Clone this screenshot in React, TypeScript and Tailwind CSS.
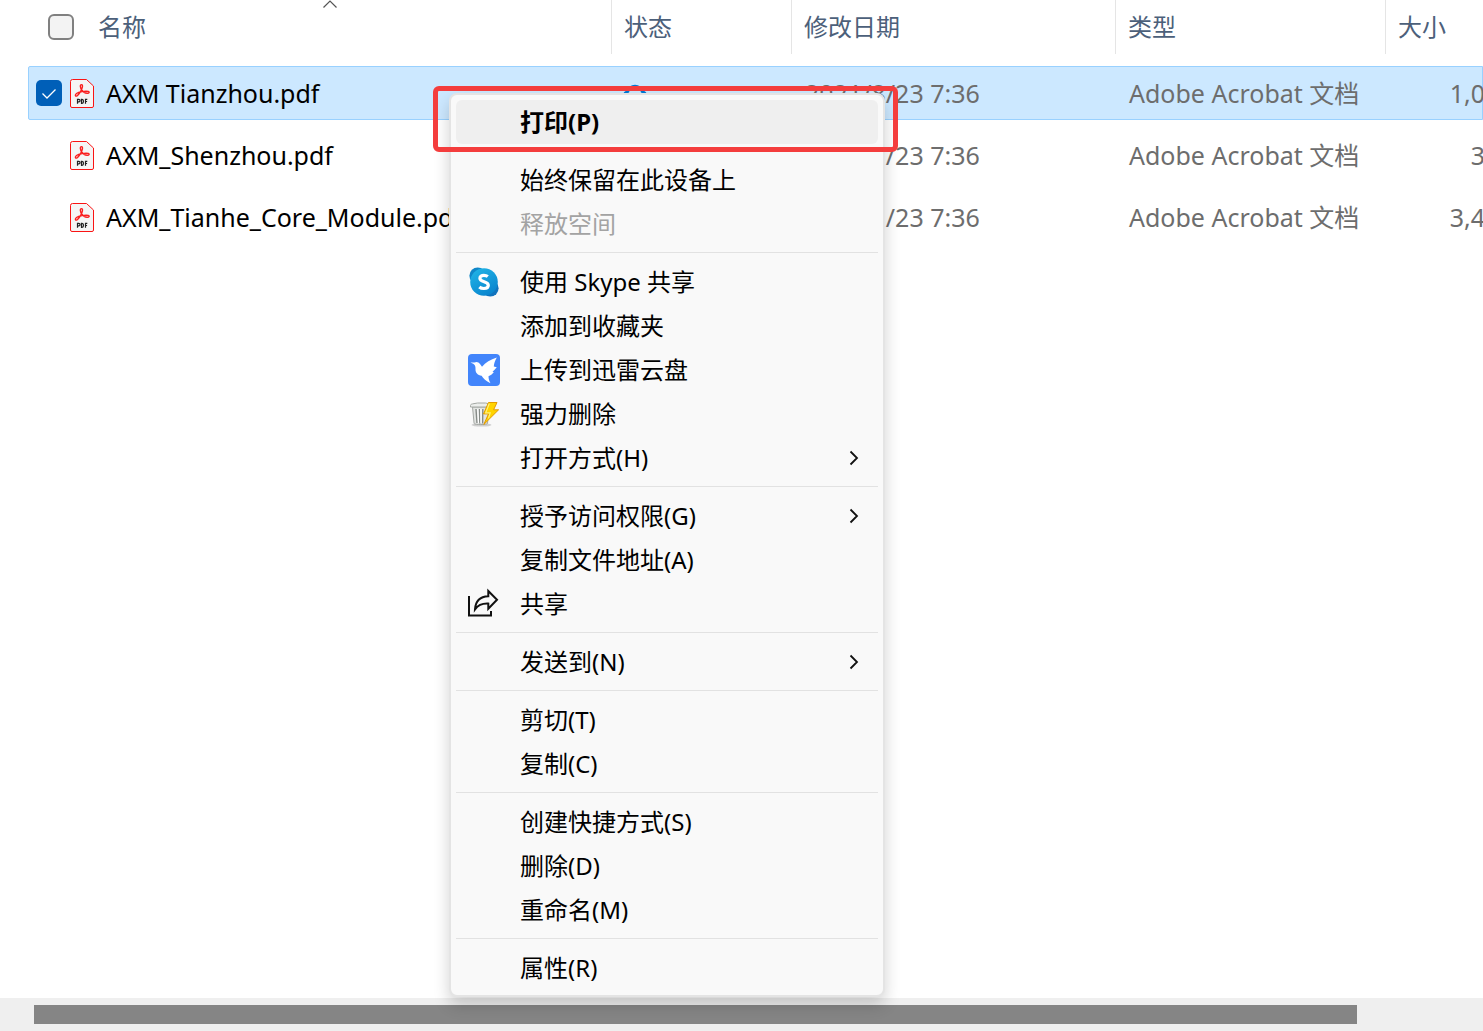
import { Fragment, type ReactNode } from "react";

const PdfIcon = () => (
  <svg viewBox="0 0 24 29" className="w-6 h-[29px] shrink-0" aria-hidden="true">
    <path d="M2.500.500H16.500l7 6.500V27a1.500 1.500 0 0 1-1.500 1.500H2A1.500 1.500 0 0 1 .500 27V2.500A2 2 0 0 1 2.500.500Z" fill="#f5f5f5" stroke="#fa1414" />
    <path
      d="M11.500 5.600c-2 0-1 3.600.2 5.400 1.200 2 3.500 3.300 5.500 3.300 2.200 0 2.600-1.500 1-1.900-3-.7-9.500.5-11.700 2.100-1.900 1.500-1.200 3.300.5 2.300 2.200-1.500 5-6.100 5.400-8.800.2-1.500 0-2.400-.9-2.400Z"
      fill="none"
      stroke="#fa1e1e"
      strokeWidth="1.400"
    />
    <path
      d="M7.500 24.800v-4.500h1.300a1.100 1.100 0 0 1 0 2.500H7.500M11.500 20.300v4h.6c1 0 1.400-.7 1.400-2s-.4-2-1.400-2ZM15.500 24.800v-4.500h1.800M15.500 22.500h1.600"
      fill="none"
      stroke="#222"
      strokeWidth="1.200"
    />
  </svg>
);

const CloudIcon = () => (
  <svg viewBox="0 0 24 18" className="w-6 h-[18px]" aria-hidden="true">
    <path d="M5.500 16.500a4.500 4.500 0 0 1-.6-8.900 7.300 7.300 0 0 1 14.200 0A4.500 4.500 0 0 1 18.500 16.500Z" fill="none" stroke="#0078d4" strokeWidth="2.600" />
  </svg>
);

const SkypeIcon = () => (
  <svg viewBox="0 0 32 32" className="w-8 h-8" aria-hidden="true">
    <defs>
      <linearGradient id="skype" x1="0" y1="0" x2="0.6" y2="1">
        <stop offset="0" stopColor="#22b8e8" />
        <stop offset="1" stopColor="#0a86cf" />
      </linearGradient>
    </defs>
    <circle cx="9.700" cy="9.700" r="8.300" fill="#0f86c8" />
    <circle cx="22.300" cy="22.300" r="8.300" fill="#1173bd" />
    <circle cx="16" cy="16" r="13.800" fill="url(#skype)" />
    <path
      d="M19.800 10.600c-1-.8-2.400-1.200-4-1.200-2.200 0-3.900 1-3.900 2.900 0 4.300 8.400 2.600 8.400 6.900 0 2.200-1.800 3.300-4.400 3.300-1.800 0-3.500-.5-4.600-1.500"
      fill="none"
      stroke="#fff"
      strokeWidth="3.200"
    />
  </svg>
);

const ThunderIcon = () => (
  <svg viewBox="0 0 32 32" className="w-8 h-8" aria-hidden="true">
    <rect width="32" height="32" rx="4" fill="#4285fb" />
    <path d="M2.500 8.500 6.500 8.600C8.200 7.200 10.800 8 12 10l2 2.800c3.500-4 8.500-7.300 14.800-9.200-2 3.400-2.700 6-3 9l3 .6c-1.600 2-2.800 3.200-4.300 4.200l1.300.8c-1.600 2-3.200 3.200-5.300 4 .1 2.600.7 4.800 2 7-4.600-2.400-7.200-4.700-8.900-7.500-3.800-.4-6.400-3-6.100-6.700.2-2.700-.4-4.900-5-6.500Z" fill="#fff" />
  </svg>
);

const ForceDeleteIcon = () => (
  <svg viewBox="0 0 32 32" className="w-8 h-8" aria-hidden="true">
    <ellipse cx="13.500" cy="27" rx="10" ry="1.600" fill="#cfcfcf" />
    <path d="m4.500 9 1.600 16.500c.1 1.400 13.200 1.400 13.400 0L21 9Z" fill="#e2e4e2" stroke="#a4a8a4" />
    <path d="M8 11l1 14M11.300 11l.5 14.500M14.800 11l-.2 14.500" stroke="#868b87" strokeWidth="1.400" />
    <path d="M9.800 11l.7 14M13 11v14" stroke="#fff" strokeWidth="1.200" />
    <path d="M2.500 7.500c0-1 1-1.500 2-1.600l5-.9h8l4 .9c1 .1 2 .6 2 1.600V9h-21Z" fill="#eceeec" stroke="#a4a8a4" />
    <path d="M20.500 4.500h8.500l-3.400 7.300h5L15.800 26.500l4.700-10.600h-5Z" fill="#ffd400" stroke="#e39a00" strokeLinejoin="round" />
    <path d="m21.300 5.500-3.600 9.300h4.500l-1.700 5.600" fill="none" stroke="#fff27a" strokeWidth="1.200" />
  </svg>
);

const ShareIcon = () => (
  <svg viewBox="0 0 32 32" className="w-8 h-8" fill="none" stroke="#111" strokeWidth="2" aria-hidden="true">
    <path d="M1 8v19.500h22V23" />
    <path d="M20.300 3v5.200C12.500 8.500 7.500 13 7 21.300c3-4.200 7.500-6 13.300-5.700v5.200l8.700-9Z" />
  </svg>
);

type Item = { label: string; icon?: ReactNode; submenu?: boolean; disabled?: boolean; active?: boolean };

const groups: Item[][] = [
  [{ label: "打印(P)", active: true }],
  [{ label: "始终保留在此设备上" }, { label: "释放空间", disabled: true }],
  [
    { label: "使用 Skype 共享", icon: <SkypeIcon /> },
    { label: "添加到收藏夹" },
    { label: "上传到迅雷云盘", icon: <ThunderIcon /> },
    { label: "强力删除", icon: <ForceDeleteIcon /> },
    { label: "打开方式(H)", submenu: true },
  ],
  [
    { label: "授予访问权限(G)", submenu: true },
    { label: "复制文件地址(A)" },
    { label: "共享", icon: <ShareIcon /> },
  ],
  [{ label: "发送到(N)", submenu: true }],
  [{ label: "剪切(T)" }, { label: "复制(C)" }],
  [{ label: "创建快捷方式(S)" }, { label: "删除(D)" }, { label: "重命名(M)" }],
  [{ label: "属性(R)" }],
];

const files = [
  { name: "AXM Tianzhou.pdf", size: "1,0", selected: true },
  { name: "AXM_Shenzhou.pdf", size: "3", selected: false },
  { name: "AXM_Tianhe_Core_Module.pdf", size: "3,4", selected: false },
];

const columns = "grid grid-cols-[584px_180px_324px_270px_110px]";

const FileTable = () => (
  <table className="block pl-7 whitespace-nowrap">
    <thead className="block text-[#4c607a]">
      <tr className={`${columns} h-[54px] text-left leading-[54px]`}>
        <th className="relative flex items-center gap-6 pl-5 font-normal border-r border-[#e5e5e5]">
          <input type="checkbox" aria-label="全选" className="appearance-none w-[26px] h-[26px] rounded-md border-2 border-[#808080] bg-[#f3f3f3]" />
          名称
          <svg viewBox="0 0 14 8" className="absolute top-0 left-[295px] w-3.5 h-2" fill="none" stroke="#555" strokeWidth="1.200" aria-hidden="true">
            <path d="m.5 7.500 6.500-6.500 6.500 6.500" />
          </svg>
        </th>
        <th className="pl-3 font-normal border-r border-[#e5e5e5]">状态</th>
        <th className="pl-3 font-normal border-r border-[#e5e5e5]">修改日期</th>
        <th className="pl-3 font-normal border-r border-[#e5e5e5]">类型</th>
        <th className="pl-3 font-normal">大小</th>
      </tr>
    </thead>
    <tbody className="flex flex-col gap-2 pt-3 text-[25px] text-[#6d6d6d]">
      {files.map((file) => (
        <tr
          key={file.name}
          className={`${columns} h-[54px] items-center border rounded-l-xs ${file.selected ? "bg-[#cce8ff] border-[#99d1ff]" : "border-transparent"}`}
        >
          <td className="flex items-center pl-[7px] text-black">
            <span className="relative w-[26px] h-[26px] mr-2">
              {file.selected && (
                <>
                  <input type="checkbox" aria-label={file.name} defaultChecked className="block appearance-none w-[26px] h-[26px] rounded-[5px] bg-[#005fb8]" />
                  <svg viewBox="0 0 26 26" className="absolute inset-0 pointer-events-none" fill="none" stroke="#fff" strokeWidth="1.300" aria-hidden="true">
                    <path d="m6.500 13.500 4.500 4.500 8.500-8.500" />
                  </svg>
                </>
              )}
            </span>
            <PdfIcon />
            <span className="pl-3">{file.name}</span>
          </td>
          <td className="pl-2.5">{file.selected && <CloudIcon />}</td>
          <td className="pl-3">2021/8/23 7:36</td>
          <td className="pl-3">Adobe Acrobat 文档</td>
          <td className="pr-3 text-right">{file.size}</td>
        </tr>
      ))}
    </tbody>
  </table>
);

const MenuItem = ({ label, icon, submenu, disabled, active }: Item) => (
  <button
    role="menuitem"
    disabled={disabled}
    className={`flex items-center w-full h-11 px-3 rounded-md text-left ${active ? "bg-[#efefef] font-bold" : ""} ${disabled ? "text-[#a3a3a3]" : "text-black"}`}
  >
    <span className="w-8 shrink-0 mr-5">{icon}</span>
    <span className="flex-1">{label}</span>
    {submenu && (
      <svg viewBox="0 0 10 16" className="w-2.5 h-4 mr-[7px]" fill="none" stroke="#111" strokeWidth="1.800" aria-hidden="true">
        <path d="m1.500 1.500 6.500 6.500-6.500 6.500" />
      </svg>
    )}
  </button>
);

const ContextMenu = () => (
  <div
    role="menu"
    className="absolute left-[449px] top-[93px] w-[436px] p-[5px] border-2 border-[#e4e4e4] rounded-lg bg-[#f9f9f9] shadow-[0_8px_16px_rgba(0,0,0,0.18)]"
  >
    {groups.map((group, i) => (
      <Fragment key={i}>
        {i > 0 && <hr className="h-px mt-1.5 mb-[7px] border-0 bg-[#e2e2e2]" />}
        {group.map((item) => (
          <MenuItem key={item.label} {...item} />
        ))}
      </Fragment>
    ))}
  </div>
);

export default function App() {
  return (
    <div className="relative flex flex-col h-screen overflow-hidden bg-white text-[24px] leading-8 font-['Noto_Sans','Noto_Sans_CJK_SC',sans-serif]">
      <main className="flex-1">
        <FileTable />
      </main>

      {/* Horizontal scrollbar */}
      <div className="flex h-[33px] py-[7px] pl-[34px] pr-[126px] bg-[#efefef]">
        <div className="flex-1 bg-[#858585]" />
      </div>

      <ContextMenu />
      {/* Highlight around the print command */}
      <div className="absolute left-[433px] top-[86px] w-[465px] h-[66px] border-5 border-[#f43d3d] rounded-md pointer-events-none" />
    </div>
  );
}
